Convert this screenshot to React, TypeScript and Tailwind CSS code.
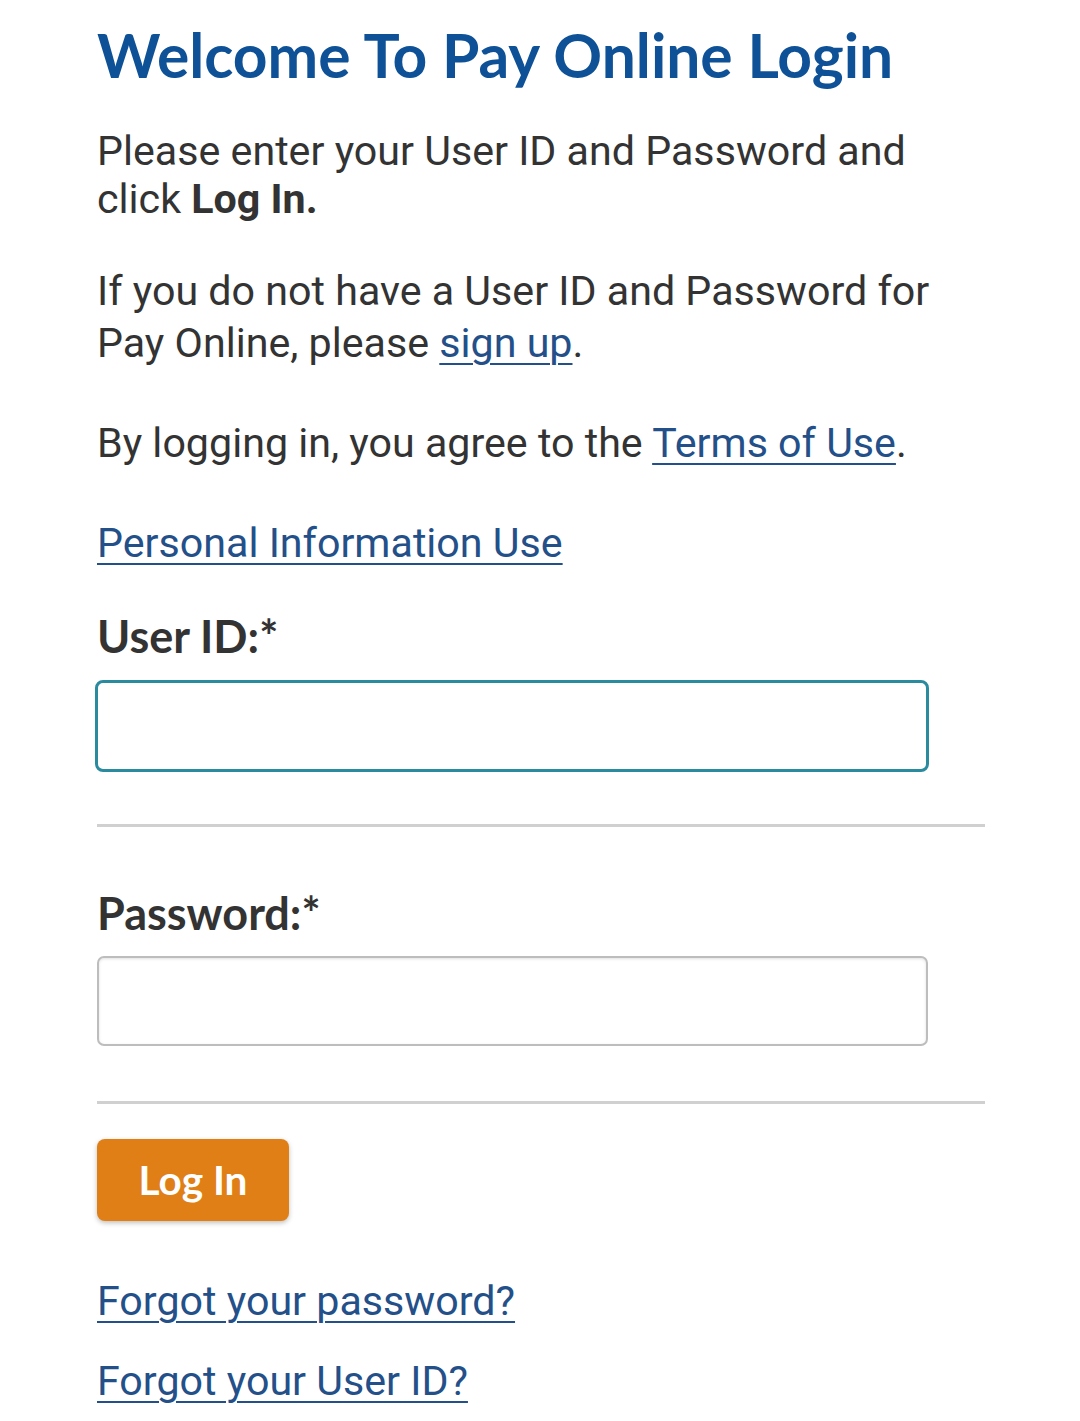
const App = () => {
  return (
    <div className="min-h-[1421px] bg-white text-[#333] font-['Roboto',sans-serif]">
      <div className="pl-[97px] pr-[95px] pt-[20px]">
        <h1 className="font-['Lato',sans-serif] font-bold text-[60.5px] leading-[70px] text-[#0e5197]">
          Welcome To Pay Online Login
        </h1>
        <p className="mt-[37px] text-[41.2px] leading-[48px]">
          Please enter your User ID and Password and click{" "}
          <strong className="font-bold">Log In.</strong>
        </p>
        <p className="mt-[42px] text-[41.2px] leading-[52px]">
          If you do not have a User ID and Password for Pay Online, please{" "}
          <a href="#" className="text-[#24508a] underline decoration-2 underline-offset-[6px]">
            sign up
          </a>
          .
        </p>
        <p className="mt-[48px] text-[41.2px] leading-[52px]">
          By logging in, you agree to the{" "}
          <a href="#" className="text-[#24508a] underline decoration-2 underline-offset-[6px]">
            Terms of Use
          </a>
          .
        </p>
        <p className="mt-[48px] text-[41.2px] leading-[52px]">
          <a href="#" className="text-[#24508a] underline decoration-2 underline-offset-[6px]">
            Personal Information Use
          </a>
        </p>

        <label className="mt-[41px] block font-['Lato',sans-serif] font-bold text-[45px] leading-[52px] text-[#333]">
          User ID:*
        </label>
        <input
          type="text"
          className="mt-[18px] block w-[834px] h-[92px] ml-[-2px] rounded-[8px] border-[3px] border-[#2a8a9e] bg-white outline-none"
        />
        <hr className="mt-[52px] border-0 h-[3px] bg-[#d0d0d0]" />

        <label className="mt-[60px] block font-['Lato',sans-serif] font-bold text-[45px] leading-[52px] text-[#333]">
          Password:*
        </label>
        <input
          type="password"
          className="mt-[17px] block w-[831px] h-[90px] rounded-[7px] border-2 border-[#bdbdbd] bg-white shadow-[inset_0_1px_3px_rgba(0,0,0,0.12)] outline-none"
        />
        <hr className="mt-[55px] border-0 h-[3px] bg-[#d0d0d0]" />

        <button className="mt-[35px] block w-[192px] h-[82px] rounded-[8px] bg-[#e07f16] text-white font-['Lato',sans-serif] font-bold text-[40.5px] shadow-[0_2px_5px_rgba(0,0,0,0.25)]">
          Log In
        </button>

        <div className="mt-[54px] flex flex-col gap-[28px] text-[41.2px] leading-[52px]">
          <a href="#" className="w-max text-[#24508a] underline decoration-2 underline-offset-[6px]">
            Forgot your password?
          </a>
          <a href="#" className="w-max text-[#24508a] underline decoration-2 underline-offset-[6px]">
            Forgot your User ID?
          </a>
        </div>
      </div>
    </div>
  );
};

export default App;
